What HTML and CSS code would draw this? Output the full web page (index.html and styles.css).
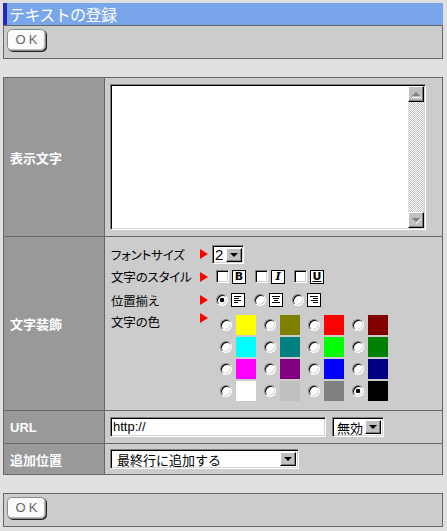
FILE: index.html
```html
<!DOCTYPE html>
<html lang="ja">
<head>
<meta charset="utf-8">
<title>テキストの登録</title>
<link rel="stylesheet" href="styles.css">
</head>
<body>
<div class="page">
  <div class="titlebar">テキストの登録</div>
  <div class="panel"><button class="okbtn" type="button">OK</button></div>

  <div class="form">
    <div class="lbl">表示文字</div>
    <div class="cell cell-text">
      <div class="ta-box">
        <textarea class="ta"></textarea>
        <div class="sbar">
          <div class="sbtn"><svg width="14" height="14" viewBox="0 0 14 14"><polygon points="3,9 7,5 11,9" fill="#808080"/><line x1="3" y1="10.5" x2="12" y2="10.5" stroke="#fff"/></svg></div>
          <div class="strack"></div>
          <div class="sbtn"><svg width="14" height="14" viewBox="0 0 14 14"><polygon points="3,5 11,5 7,9" fill="#808080"/><line x1="7" y1="10.5" x2="12" y2="6" stroke="#fff"/></svg></div>
        </div>
      </div>
    </div>

    <div class="lbl">文字装飾</div>
    <div class="cell cell-deco">
      <div class="deco">
        <div class="dl l1">フォントサイズ</div>
        <div class="tri l1"><svg width="8" height="10" viewBox="0 0 8 10"><polygon points="0,0 8,5 0,10" fill="#f00"/></svg></div>
        <div class="dc l1">
          <div class="sel sel-size"><span class="sel-val">2</span><span class="sel-btn"><svg width="8" height="4" viewBox="0 0 8 4"><polygon points="0,0 8,0 4,4" fill="#000"/></svg></span></div>
        </div>

        <div class="dl l2">文字のスタイル</div>
        <div class="tri l2"><svg width="8" height="10" viewBox="0 0 8 10"><polygon points="0,0 8,5 0,10" fill="#f00"/></svg></div>
        <div class="dc l2 opts">
          <span class="opt"><input type="checkbox" class="cb"><span class="ico ico-b">B</span></span>
          <span class="opt"><input type="checkbox" class="cb"><span class="ico ico-i">I</span></span>
          <span class="opt"><input type="checkbox" class="cb"><span class="ico ico-u">U</span></span>
        </div>

        <div class="dl l3">位置揃え</div>
        <div class="tri l3"><svg width="8" height="10" viewBox="0 0 8 10"><polygon points="0,0 8,5 0,10" fill="#f00"/></svg></div>
        <div class="dc l3 opts">
          <span class="opt"><input type="radio" name="al" class="rb" checked><svg class="aico" width="14" height="14" viewBox="0 0 14 14"><rect x="0.5" y="0.5" width="13" height="13" fill="#fff" stroke="#000"/><path d="M3 3.5H10M3 5.5H8M3 7.5H10M3 9.5H7" stroke="#000"/></svg></span>
          <span class="opt"><input type="radio" name="al" class="rb"><svg class="aico" width="14" height="14" viewBox="0 0 14 14"><rect x="0.5" y="0.5" width="13" height="13" fill="#fff" stroke="#000"/><path d="M3 3.5H11M4 5.5H10M5 7.5H9M3 9.5H11" stroke="#000"/></svg></span>
          <span class="opt"><input type="radio" name="al" class="rb"><svg class="aico" width="14" height="14" viewBox="0 0 14 14"><rect x="0.5" y="0.5" width="13" height="13" fill="#fff" stroke="#000"/><path d="M3 3.5H11M6 5.5H11M4 7.5H11M6 9.5H11" stroke="#000"/></svg></span>
        </div>

        <div class="dl l4">文字の色</div>
        <div class="tri l4"><svg width="8" height="10" viewBox="0 0 8 10"><polygon points="0,0 8,5 0,10" fill="#f00"/></svg></div>
        <div class="dc l4">
          <div class="colors">
            <span class="copt"><input type="radio" name="c" class="rb"><span class="sw" style="background:#ffff00"></span></span>
            <span class="copt"><input type="radio" name="c" class="rb"><span class="sw" style="background:#808000"></span></span>
            <span class="copt"><input type="radio" name="c" class="rb"><span class="sw" style="background:#ff0000"></span></span>
            <span class="copt"><input type="radio" name="c" class="rb"><span class="sw" style="background:#800000"></span></span>
            <span class="copt"><input type="radio" name="c" class="rb"><span class="sw" style="background:#00ffff"></span></span>
            <span class="copt"><input type="radio" name="c" class="rb"><span class="sw" style="background:#008080"></span></span>
            <span class="copt"><input type="radio" name="c" class="rb"><span class="sw" style="background:#00ff00"></span></span>
            <span class="copt"><input type="radio" name="c" class="rb"><span class="sw" style="background:#008000"></span></span>
            <span class="copt"><input type="radio" name="c" class="rb"><span class="sw" style="background:#ff00ff"></span></span>
            <span class="copt"><input type="radio" name="c" class="rb"><span class="sw" style="background:#800080"></span></span>
            <span class="copt"><input type="radio" name="c" class="rb"><span class="sw" style="background:#0000ff"></span></span>
            <span class="copt"><input type="radio" name="c" class="rb"><span class="sw" style="background:#000080"></span></span>
            <span class="copt"><input type="radio" name="c" class="rb"><span class="sw" style="background:#ffffff"></span></span>
            <span class="copt"><input type="radio" name="c" class="rb"><span class="sw" style="background:#c0c0c0"></span></span>
            <span class="copt"><input type="radio" name="c" class="rb"><span class="sw" style="background:#808080"></span></span>
            <span class="copt"><input type="radio" name="c" class="rb" checked><span class="sw" style="background:#000000"></span></span>
          </div>
        </div>
      </div>
    </div>

    <div class="lbl lbl-url">URL</div>
    <div class="cell cell-row">
      <div class="inp inp-url">http://</div>
      <div class="sel sel-link"><span class="sel-val">無効</span><span class="sel-btn"><svg width="8" height="4" viewBox="0 0 8 4"><polygon points="0,0 8,0 4,4" fill="#000"/></svg></span></div>
    </div>

    <div class="lbl">追加位置</div>
    <div class="cell cell-row">
      <div class="sel sel-pos"><span class="sel-val">最終行に追加する</span><span class="sel-btn"><svg width="8" height="4" viewBox="0 0 8 4"><polygon points="0,0 8,0 4,4" fill="#000"/></svg></span></div>
    </div>
  </div>

  <div class="panel panel-bottom"><button class="okbtn" type="button">OK</button></div>
</div>
</body>
</html>
```

FILE: styles.css
```css
* { box-sizing: border-box; }
html, body { margin: 0; padding: 0; }
body {
  background: #e0e0e0;
  font-family: "Noto Sans CJK JP", sans-serif;
  font-size: 13px;
  color: #000;
}
.page { padding: 3px 4px 0 3px; }

.titlebar {
  height: 22px;
  background: #79a6ea;
  border-left: 4px solid #2a2ab4;
  color: #fff;
  font-size: 16px;
  line-height: 22px;
  padding-left: 2px;
  letter-spacing: -0.6px;
}
.panel {
  height: 34px;
  border: 1px solid #666;
  background: #ccc;
  padding: 3px;
}
.panel-bottom { margin-top: 18px; }

.okbtn {
  display: block;
  width: 39px;
  height: 22px;
  margin: 0;
  padding: 0 0 0 3px;
  background: #fbfbfb;
  border: 1px solid #8a8a8a;
  border-radius: 5px;
  box-shadow: 1px 1px 0 #222, inset -1px -1px 0 #bbb;
  font-family: "Liberation Sans", sans-serif;
  font-size: 13px;
  letter-spacing: 3px;
  color: #666;
  line-height: 18px;
}

.form {
  margin-top: 18px;
  display: grid;
  grid-template-columns: 100px 1fr;
  grid-template-rows: 158px 173px 32px 30px;
  gap: 1px;
  background: #666;
  border: 1px solid #666;
}
.lbl {
  background: #999;
  color: #fff;
  font-weight: bold;
  padding-left: 6px;
  display: flex;
  align-items: center;
  font-size: 13px;
}
.lbl-url { font-family: "Liberation Sans", sans-serif; font-size: 13px; }
.cell { background: #ccc; }

.cell-text { padding: 6px 0 0 5px; }
.ta-box {
  width: 316px;
  height: 146px;
  display: flex;
  border: 1px solid;
  border-color: #808080 #fff #fff #808080;
  box-shadow: inset 1px 1px 0 #000, inset -1px -1px 0 #d4d4d4;
  padding: 1px;
  background: #fff;
}
.ta {
  flex: 1;
  border: 0;
  margin: 0;
  resize: none;
  outline: none;
  background: #fff;
  overflow: hidden;
}
.sbar {
  width: 16px;
  display: flex;
  flex-direction: column;
}
.sbtn {
  width: 16px;
  height: 16px;
  background: #c0c0c0;
  border: 1px solid;
  border-color: #fff #000 #000 #fff;
  box-shadow: inset -1px -1px 0 #808080;
  display: flex;
  align-items: center;
  justify-content: center;
}
.strack {
  flex: 1;
  background-color: #fff;
  background-image: repeating-conic-gradient(#c0c0c0 0 25%, #fff 0 50%);
  background-size: 2px 2px;
}

.cell-deco { padding: 6px 0 0 6px; }
.deco {
  display: grid;
  grid-template-columns: 89px 12px auto;
  grid-template-rows: 22px 23px 24px auto;
  font-feature-settings: "palt";
}
.dl { display: flex; align-items: center; font-size: 12.5px; letter-spacing: -0.2px; }
.tri { display: flex; align-items: center; }
.dc { display: flex; align-items: center; }
.l4 { align-items: flex-start; }
.dl.l4 { padding-top: 2px; line-height: 16px; }
.tri.l4 { padding-top: 1px; }
.dc.l4 { padding-top: 3px; padding-left: 8px; }
.dl.l3 { padding-top: 1px; }

.opts { padding-left: 4px; gap: 9px; }
.opt { display: inline-flex; align-items: center; gap: 3px; }

.cb {
  appearance: none;
  -webkit-appearance: none;
  margin: 0;
  width: 13px;
  height: 13px;
  background: #fff;
  border: 1px solid;
  border-color: #808080 #fff #fff #808080;
  box-shadow: inset 1px 1px 0 #000, inset -1px -1px 0 #d4d4d4;
}
.ico {
  width: 14px;
  height: 14px;
  border: 1px solid #000;
  background: #fff;
  display: inline-flex;
  align-items: center;
  justify-content: center;
  font-family: "DejaVu Sans", sans-serif;
  font-weight: bold;
  font-size: 11px;
  line-height: 1;
}
.ico-i { font-style: italic; font-family: "DejaVu Serif", serif; }
.ico-u { text-decoration: underline; }

.rb {
  appearance: none;
  -webkit-appearance: none;
  margin: 0;
  width: 12px;
  height: 12px;
  border-radius: 50%;
  background: #fff;
  border: 1px solid;
  border-color: #808080 #fff #fff #808080;
  box-shadow: inset 1px 1px 0 #000, inset -1px -1px 0 #d4d4d4;
}
.rb:checked { background: radial-gradient(circle, #000 0 2px, #fff 2.6px); }
.aico { display: block; }

.colors {
  display: grid;
  grid-template-columns: repeat(4, 36px);
  column-gap: 8px;
  row-gap: 2px;
}
.copt { display: flex; align-items: center; gap: 4px; }
.sw { width: 20px; height: 20px; display: block; }

.cell-row { display: flex; align-items: center; padding-left: 5px; gap: 6px; }

.inp {
  height: 20px;
  background: #fff;
  border: 1px solid;
  border-color: #808080 #fff #fff #808080;
  box-shadow: inset 1px 1px 0 #000, inset -1px -1px 0 #d4d4d4;
  font-family: "Liberation Sans", sans-serif;
  font-size: 13px;
  line-height: 18px;
  padding-left: 2px;
}
.inp-url { width: 216px; }

.sel {
  display: flex;
  align-items: stretch;
  height: 20px;
  background: #fff;
  border: 1px solid;
  border-color: #808080 #fff #fff #808080;
  box-shadow: inset 1px 1px 0 #000, inset -1px -1px 0 #d4d4d4;
  padding: 2px;
}
.sel-val {
  flex: 1;
  display: flex;
  align-items: center;
  padding-left: 2px;
  white-space: nowrap;
  line-height: 1;
}
.sel-btn {
  width: 16px;
  flex: none;
  background: #c0c0c0;
  border: 1px solid;
  border-color: #fff #000 #000 #fff;
  box-shadow: inset -1px -1px 0 #808080;
  display: flex;
  align-items: center;
  justify-content: center;
}
.sel-size { width: 32px; height: 19px; padding: 2px 1px 1px 2px; font-family: "Liberation Sans", sans-serif; font-size: 15px; }
.sel-size .sel-val { padding-left: 0; }
.sel-link { width: 52px; }
.sel-pos { width: 189px; }
.sel-pos .sel-val { padding-left: 4px; }
```
